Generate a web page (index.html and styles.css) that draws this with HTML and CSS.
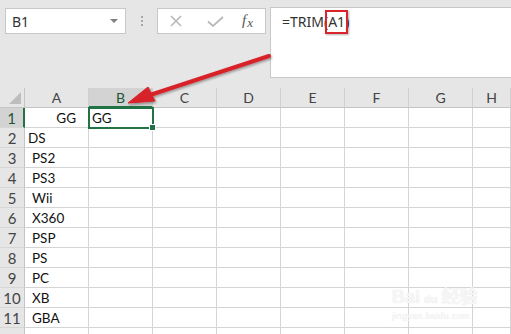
FILE: index.html
```html
<!DOCTYPE html>
<html lang="en">

<head>
    <meta charset="UTF-8">
    <meta name="viewport" content="width=device-width, initial-scale=1.0">
    <title>TRIM</title>
    <link rel="stylesheet" href="styles.css">
</head>

<body>
    <!-- Name box + formula bar -->
    <div class="toolbar">
        <div class="namebox">
            <span>B1</span>
            <span class="caret"></span>
        </div>
        <div class="grip"><i></i><i></i><i></i></div>
        <div class="fxbox">
            <svg class="icon-cancel" width="12" height="12" viewBox="0 0 12 12">
                <path d="M1 1L11 11M11 1L1 11" stroke="#b9b9b9" stroke-width="1.6" fill="none"/>
            </svg>
            <svg class="icon-enter" width="17" height="11" viewBox="0 0 17 11">
                <path d="M1 5.5L6 10L16 1" stroke="#b9b9b9" stroke-width="1.8" fill="none"/>
            </svg>
            <span class="fx"><i>f</i><i class="x">x</i></span>
        </div>
        <div class="formula">=TRIM(<span class="ref">A1</span>)</div>
    </div>

    <!-- Sheet -->
    <div class="sheet">
        <div class="corner"><span></span></div>
        <div class="colhead">A</div>
        <div class="colhead active">B</div>
        <div class="colhead">C</div>
        <div class="colhead">D</div>
        <div class="colhead">E</div>
        <div class="colhead">F</div>
        <div class="colhead">G</div>
        <div class="colhead">H</div>

        <div class="rowhead active">1</div>
        <div class="cell spaced-right">GG</div>
        <div class="cell selected">GG</div>
        <div class="cell"></div><div class="cell"></div><div class="cell"></div><div class="cell"></div><div class="cell"></div><div class="cell"></div>

        <div class="rowhead">2</div>
        <div class="cell">DS</div>
        <div class="cell"></div><div class="cell"></div><div class="cell"></div><div class="cell"></div><div class="cell"></div><div class="cell"></div><div class="cell"></div>

        <div class="rowhead">3</div>
        <div class="cell spaced">PS2</div>
        <div class="cell"></div><div class="cell"></div><div class="cell"></div><div class="cell"></div><div class="cell"></div><div class="cell"></div><div class="cell"></div>

        <div class="rowhead">4</div>
        <div class="cell spaced">PS3</div>
        <div class="cell"></div><div class="cell"></div><div class="cell"></div><div class="cell"></div><div class="cell"></div><div class="cell"></div><div class="cell"></div>

        <div class="rowhead">5</div>
        <div class="cell spaced">Wii</div>
        <div class="cell"></div><div class="cell"></div><div class="cell"></div><div class="cell"></div><div class="cell"></div><div class="cell"></div><div class="cell"></div>

        <div class="rowhead">6</div>
        <div class="cell spaced">X360</div>
        <div class="cell"></div><div class="cell"></div><div class="cell"></div><div class="cell"></div><div class="cell"></div><div class="cell"></div><div class="cell"></div>

        <div class="rowhead">7</div>
        <div class="cell spaced">PSP</div>
        <div class="cell"></div><div class="cell"></div><div class="cell"></div><div class="cell"></div><div class="cell"></div><div class="cell"></div><div class="cell"></div>

        <div class="rowhead">8</div>
        <div class="cell spaced">PS</div>
        <div class="cell"></div><div class="cell"></div><div class="cell"></div><div class="cell"></div><div class="cell"></div><div class="cell"></div><div class="cell"></div>

        <div class="rowhead">9</div>
        <div class="cell spaced">PC</div>
        <div class="cell"></div><div class="cell"></div><div class="cell"></div><div class="cell"></div><div class="cell"></div><div class="cell"></div><div class="cell"></div>

        <div class="rowhead">10</div>
        <div class="cell spaced">XB</div>
        <div class="cell"></div><div class="cell"></div><div class="cell"></div><div class="cell"></div><div class="cell"></div><div class="cell"></div><div class="cell"></div>

        <div class="rowhead">11</div>
        <div class="cell spaced">GBA</div>
        <div class="cell"></div><div class="cell"></div><div class="cell"></div><div class="cell"></div><div class="cell"></div><div class="cell"></div><div class="cell"></div>

        <div class="rowhead"></div>
        <div class="cell"></div><div class="cell"></div><div class="cell"></div><div class="cell"></div><div class="cell"></div><div class="cell"></div><div class="cell"></div><div class="cell"></div>
    </div>

    <!-- Annotation arrow pointing from the formula to B1 -->
    <svg class="arrow" width="511" height="334" viewBox="0 0 511 334">
        <defs>
            <filter id="shade" x="-10%" y="-10%" width="120%" height="130%">
                <feDropShadow dx="1" dy="1.5" stdDeviation="1" flood-color="#000" flood-opacity="0.35"/>
            </filter>
        </defs>
        <g filter="url(#shade)" fill="#d8242a" stroke="#d8242a">
            <line x1="269" y1="56" x2="150" y2="95" stroke-width="4" stroke-linecap="round"/>
            <polygon points="128,103 148,87 155,101" stroke-width="1" stroke-linejoin="round"/>
        </g>
    </svg>

    <!-- Watermark -->
    <div class="watermark">
        <div class="wm-top">Bai<span class="wm-du">du</span>经验</div>
        <div class="wm-url">jingyan.baidu.com</div>
    </div>
</body>

</html>
```

FILE: styles.css
```css
body {
    margin: 0;
    width: 511px;
    height: 334px;
    overflow: hidden;
    background: #e6e6e6;
    font-family: "Noto Sans", Arial, sans-serif;
    color: #222;
    position: relative;
}

/* ---------- toolbar ---------- */

.toolbar {
    height: 88px;
    box-sizing: border-box;
    padding: 7px 0 0 5px;
    display: flex;
    align-items: flex-start;
}

.namebox {
    width: 121px;
    height: 26px;
    margin-top: 1px;
    box-sizing: border-box;
    background: #fff;
    border: 1px solid #c8c8c8;
    display: flex;
    align-items: center;
    justify-content: space-between;
    padding: 0 7px 0 6px;
    font-size: 14px;
    color: #333;
}

.caret {
    width: 0;
    height: 0;
    border-left: 4px solid transparent;
    border-right: 4px solid transparent;
    border-top: 4px solid #808080;
}

.grip {
    width: 31px;
    padding-top: 9px;
    display: flex;
    flex-direction: column;
    align-items: center;
    gap: 2px;
}

.grip i {
    width: 2px;
    height: 2px;
    background: #a8a8a8;
}

.fxbox {
    width: 109px;
    height: 26px;
    margin-top: 1px;
    box-sizing: border-box;
    background: #fff;
    border: 1px solid #c8c8c8;
    display: flex;
    align-items: center;
    padding-left: 12px;
}

.icon-enter {
    margin-left: 25px;
}

.fx {
    margin-left: 18px;
    font-family: "Liberation Serif", serif;
    font-size: 15px;
    color: #555;
    padding-bottom: 2px;
}

.fx .x {
    font-size: 13px;
    position: relative;
    top: 2px;
    margin-left: 1px;
}

.formula {
    flex: 1;
    height: 71px;
    margin-left: 4px;
    box-sizing: border-box;
    background: #fff;
    border: 1px solid #c8c8c8;
    border-right: none;
    padding: 4px 0 0 11px;
    font-size: 14px;
    color: #333;
}

.ref {
    position: relative;
}

.ref::after {
    content: "";
    position: absolute;
    left: -3px;
    right: -3px;
    top: -2px;
    bottom: -3px;
    border: 2px solid #d8242a;
    box-shadow: 1px 1px 2px rgba(0, 0, 0, 0.3);
}

/* ---------- sheet ---------- */

.sheet {
    display: grid;
    grid-template-columns: 25px repeat(7, 64px) 1fr;
    grid-template-rows: 20px;
    grid-auto-rows: 20px;
    font-family: Lato, "Liberation Sans", sans-serif;
}

.corner {
    border-bottom: 1px solid #c4c4c4;
    border-right: 1px solid #c4c4c4;
    position: relative;
}

.corner span {
    position: absolute;
    right: 3px;
    bottom: 3px;
    width: 0;
    height: 0;
    border-left: 12px solid transparent;
    border-bottom: 12px solid #bdbdbd;
}

.colhead {
    box-sizing: border-box;
    border-right: 1px solid #d0d0d0;
    border-bottom: 1px solid #c4c4c4;
    text-align: center;
    font-size: 14px;
    line-height: 20px;
    color: #444;
}

.colhead.active {
    background: #d3d3d3;
    border-bottom: 2px solid #217346;
    color: #1d5535;
}

.rowhead {
    box-sizing: border-box;
    border-right: 1px solid #c4c4c4;
    border-bottom: 1px solid #d6d6d6;
    text-align: center;
    font-size: 15px;
    line-height: 20px;
    color: #444;
}

.rowhead.active {
    background: #d3d3d3;
    border-right: 2px solid #217346;
    color: #1d5535;
}

.cell {
    box-sizing: border-box;
    background: #fff;
    border-right: 1px solid #d4d4d4;
    border-bottom: 1px solid #d4d4d4;
    font-size: 13.5px;
    line-height: 20px;
    padding-left: 3px;
    color: #111;
    white-space: nowrap;
}

.cell.spaced {
    padding-left: 7px;
}

.cell.spaced-right {
    text-align: right;
    padding-right: 12px;
}

.cell.selected {
    position: relative;
}

.cell.selected::after {
    content: "";
    position: absolute;
    left: -1px;
    top: -1px;
    right: -2px;
    bottom: -2px;
    border: 2px solid #217346;
}

.cell.selected::before {
    content: "";
    position: absolute;
    right: -4px;
    bottom: -4px;
    width: 5px;
    height: 5px;
    background: #217346;
    border: 1px solid #fff;
    z-index: 1;
}

/* ---------- overlays ---------- */

.arrow {
    position: absolute;
    left: 0;
    top: 0;
    pointer-events: none;
}

.watermark {
    position: absolute;
    left: 392px;
    top: 286px;
    color: #f6f6f6;
    text-shadow: 0 0 1px #e2e2e2;
    font-family: "Liberation Sans", "Noto Sans CJK SC", sans-serif;
}

.wm-top {
    font-size: 18px;
    font-weight: bold;
    line-height: 22px;
}

.wm-du {
    font-size: 11px;
    margin: 0 4px;
}

.wm-url {
    font-size: 9px;
    line-height: 12px;
    letter-spacing: 0.3px;
}
```
